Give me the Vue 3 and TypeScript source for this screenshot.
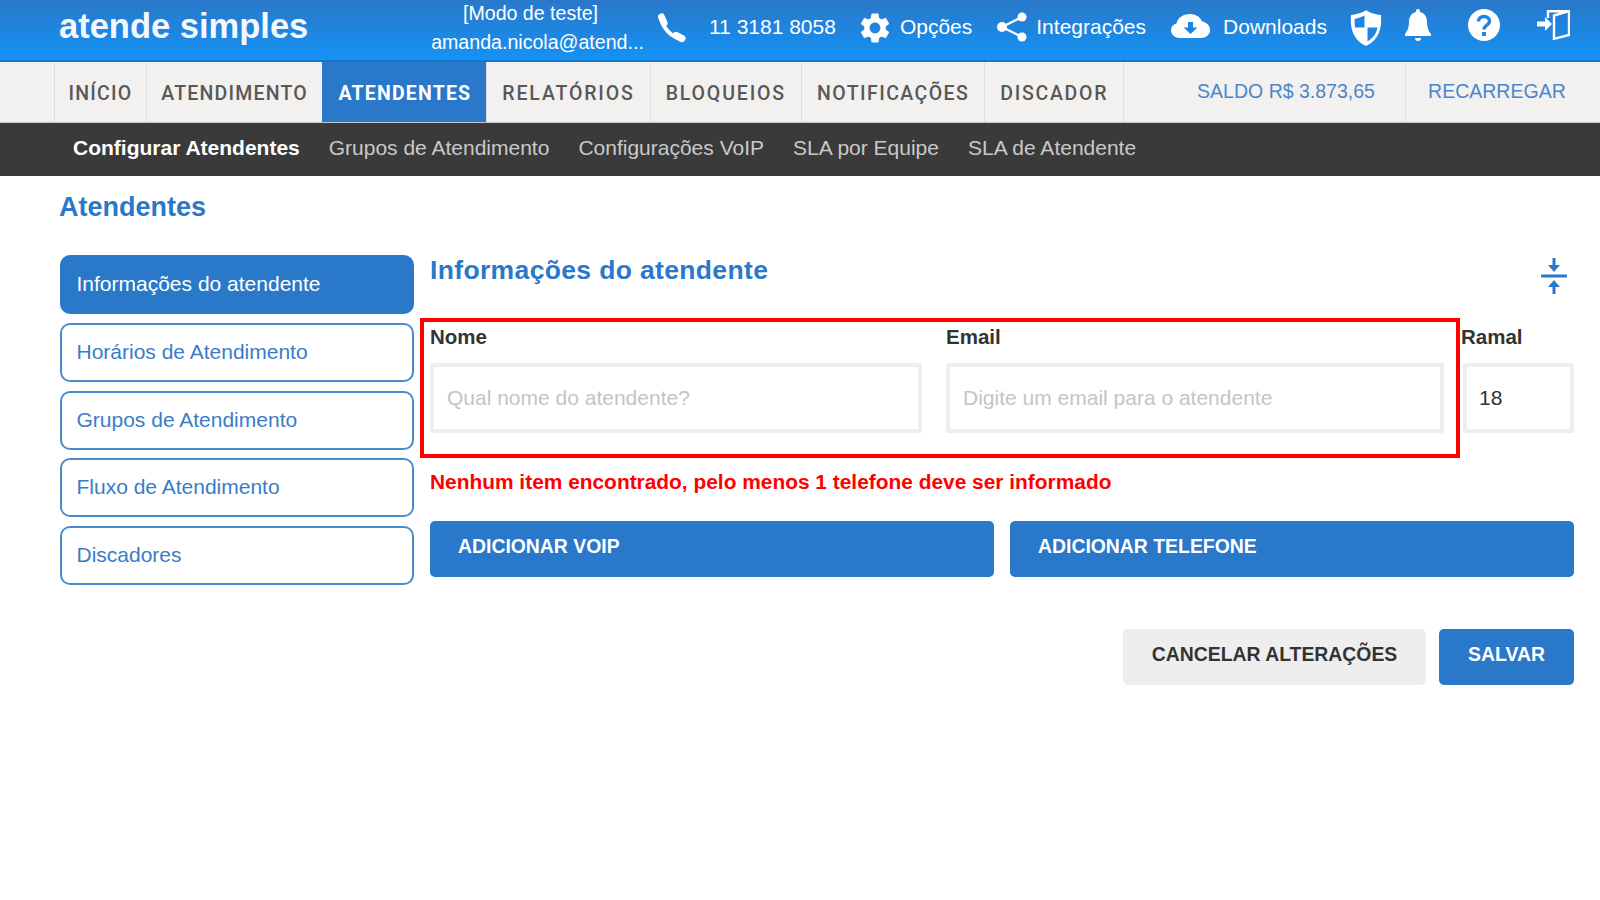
<script setup lang="ts">
const navItems = ["INÍCIO", "ATENDIMENTO", "ATENDENTES", "RELATÓRIOS", "BLOQUEIOS", "NOTIFICAÇÕES", "DISCADOR"];
const subItems = ["Configurar Atendentes", "Grupos de Atendimento", "Configurações VoIP", "SLA por Equipe", "SLA de Atendente"];
const sideItems = ["Informações do atendente", "Horários de Atendimento", "Grupos de Atendimento", "Fluxo de Atendimento", "Discadores"];
</script>

<template>
  <div class="page">
    <header class="topbar">
      <div class="logo">atende simples</div>
      <div class="account">
        <span class="mode">[Modo de teste]</span>
        <span>amanda.nicola@atend...</span>
      </div>
      <svg class="ico phone" viewBox="0 0 30 30" fill="none" stroke="#fff" stroke-linecap="round">
        <path d="M5 5C5 14 14 25 25 25" stroke-width="4" />
        <path d="M4.500 4l2.500 6" stroke-width="7" />
        <path d="M19 22.500l6 3" stroke-width="7" />
      </svg>
      <span class="top-text phone-text">11 3181 8058</span>
      <svg class="ico gear" viewBox="2 2 20 20" fill="#fff">
        <path d="M19.140 12.940c.04-.3.06-.61.06-.94 0-.32-.02-.64-.07-.94l2.030-1.580c.18-.14.23-.41.12-.61l-1.920-3.320c-.12-.22-.37-.29-.59-.22l-2.390.96c-.5-.38-1.030-.7-1.620-.94l-.36-2.540c-.04-.24-.24-.41-.48-.41h-3.840c-.24 0-.43.17-.47.41l-.36 2.540c-.59.24-1.130.57-1.620.94l-2.390-.96c-.22-.08-.47 0-.59.22L2.740 8.870c-.12.21-.08.47.12.61l2.030 1.580c-.05.3-.09.63-.09.94s.02.64.07.94l-2.030 1.580c-.18.14-.23.41-.12.61l1.920 3.320c.12.22.37.29.59.22l2.390-.96c.5.38 1.030.7 1.620.94l.36 2.540c.05.24.24.41.48.41h3.840c.24 0 .44-.17.47-.41l.36-2.540c.59-.24 1.130-.56 1.620-.94l2.390.96c.22.08.47 0 .59-.22l1.920-3.320c.12-.22.07-.47-.12-.61l-2.010-1.580zM12 15.600c-1.980 0-3.600-1.620-3.600-3.600s1.620-3.600 3.600-3.600 3.600 1.620 3.600 3.600-1.620 3.600-3.600 3.600z" />
      </svg>
      <span class="top-text opts-text">Opções</span>
      <svg class="ico share" viewBox="0 0 30 30" fill="#fff">
        <path d="M25 5L5 15l20 10" fill="none" stroke="#fff" stroke-width="2.200" />
        <circle cx="25" cy="5" r="4.500" />
        <circle cx="5" cy="15" r="5" />
        <circle cx="25" cy="25" r="4.500" />
      </svg>
      <span class="top-text integ-text">Integrações</span>
      <svg class="ico cloud" viewBox="0 0 39 24">
        <path fill="#fff" d="M9 24C4 24 0 20.500 0 16.500c0-3.500 2-6 5.500-7C6.500 4 12 0 19 0c5.500 0 10 2.800 12 7.500 4.500.5 8 4 8 8.500 0 4.500-4 8-9 8z" />
        <path fill="#1d85e4" d="M17 8h5v5.500h4.500L19.500 20l-7-6.500H17z" />
      </svg>
      <span class="top-text down-text">Downloads</span>
      <svg class="ico shield" viewBox="0 0 32 36">
        <path fill="#fff" d="M16 0c3 2.500 9 4.500 15 5 1 13-2 25-15 31C3 30 0 18 1 5c6-.5 12-2.500 15-5z" />
        <path fill="#1d85e4" d="M14.500 5.500v12H5c-.3-3 -.4-5.500-.3-8.700 3.800-.5 7-1.700 9.800-3.300zM17.500 17.500h10c-1 5.500-4 10.500-10 14z" />
      </svg>
      <svg class="ico bell" viewBox="0 0 26 32" fill="#fff">
        <path d="M13 0c1.200 0 2 .8 2 2v1c4.500 1 7 5 7 9.500 0 6 1.500 9.500 4 12.500v2H0v-2c2.500-3 4-6.500 4-12.500C4 8 6.500 4 11 3V2c0-1.200.8-2 2-2z" />
        <path d="M10 29h6c0 1.700-1.300 3-3 3s-3-1.300-3-3z" />
      </svg>
      <svg class="ico help" viewBox="0 0 32 32">
        <circle cx="16" cy="16" r="16" fill="#fff" />
        <path d="M10.500 12.500c0-3 2.500-5 5.500-5s5.500 2 5.500 4.700c0 4-5.500 4-5.500 8.300" fill="none" stroke="#1d85e4" stroke-width="3.500" />
        <rect x="14" y="23" width="4" height="4" fill="#1d85e4" />
      </svg>
      <svg class="ico exit" viewBox="0 0 33 30">
        <path fill="#fff" d="M0 11.500h8V7l7 7-7 7v-4.500H0z" />
        <path fill="none" stroke="#fff" stroke-width="2.400" d="M11 8V1.200h21V25L17 28.800V5.500L32 1.200" />
      </svg>
    </header>

    <nav class="mainnav">
      <a v-for="item in navItems" :key="item" class="nav-item" :class="{ active: item === 'ATENDENTES' }">{{ item }}</a>
      <span class="saldo">SALDO R$ 3.873,65</span>
      <span class="recarregar">RECARREGAR</span>
    </nav>

    <div class="subnav">
      <a v-for="(item, i) in subItems" :key="item" class="sub-item" :class="{ current: i === 0 }">{{ item }}</a>
    </div>

    <main class="content">
      <h1 class="page-title">Atendentes</h1>
      <div class="columns">
        <aside class="sidebar">
          <a v-for="(item, i) in sideItems" :key="item" class="side-item" :class="{ selected: i === 0 }">{{ item }}</a>
        </aside>

        <section class="panel">
          <div class="panel-head">
            <h2>Informações do atendente</h2>
            <svg class="collapse" viewBox="0 0 26 36" fill="#2a78c9">
              <path d="M11.500 0h3v7H19l-6 7-6-7h4.500z" />
              <rect x="0" y="16.500" width="26" height="3" />
              <path d="M13 22l6 7h-4.500v7h-3v-7H7z" />
            </svg>
          </div>

          <div class="fields">
            <div class="highlight"></div>
            <label class="field">
              <span>Nome</span>
              <input type="text" placeholder="Qual nome do atendente?" />
            </label>
            <label class="field">
              <span>Email</span>
              <input type="text" placeholder="Digite um email para o atendente" />
            </label>
            <label class="field ramal">
              <span>Ramal</span>
              <input type="text" value="18" />
            </label>
          </div>

          <p class="error">Nenhum item encontrado, pelo menos 1 telefone deve ser informado</p>

          <div class="add-row">
            <button class="btn primary add-voip">ADICIONAR VOIP</button>
            <button class="btn primary add-tel">ADICIONAR TELEFONE</button>
          </div>

          <div class="actions">
            <button class="btn cancel">CANCELAR ALTERAÇÕES</button>
            <button class="btn primary save">SALVAR</button>
          </div>
        </section>
      </div>
    </main>
  </div>
</template>

<style>
html,
body {
  background: #fff;
}
</style>

<style scoped>
.page {
  width: 1600px;
  height: 900px;
  overflow: hidden;
  font-family: "Liberation Sans", Arial, sans-serif;
  color: #333;
}

/* topo */
.topbar {
  height: 60px;
  border-bottom: 2px solid #0f78cc;
  background: linear-gradient(180deg, #2a78c9, #1492f5);
  display: flex;
  align-items: center;
  color: #fff;
}

.logo {
  margin-left: 59px;
  width: 372px;
  font-size: 34.500px;
  font-weight: 700;
  color: #f4f8fd;
  margin-top: -7px;
}

.account {
  width: 213px;
  display: flex;
  flex-direction: column;
  align-items: center;
  gap: 8px;
  font-size: 19.600px;
  line-height: 21px;
  margin-top: -4px;
  white-space: nowrap;
}

.mode {
  margin-right: 14px;
}

.ico {
  flex-shrink: 0;
  display: block;
}

.top-text {
  font-size: 21px;
  white-space: nowrap;
  margin-top: -7px;
}

.phone {
  width: 30px;
  height: 30px;
  margin-left: 13px;
  margin-top: -4px;
}

.phone-text {
  margin-left: 22px;
}

.gear {
  width: 30px;
  height: 30px;
  margin-left: 24px;
  margin-top: -5px;
}

.opts-text {
  margin-left: 10px;
}

.share {
  width: 30px;
  height: 30px;
  margin-left: 25px;
  margin-top: -6px;
}

.integ-text {
  margin-left: 9px;
}

.cloud {
  width: 39px;
  height: 24px;
  margin-left: 25px;
  margin-top: -8px;
}

.down-text {
  margin-left: 13px;
}

.shield {
  width: 32px;
  height: 36px;
  margin-left: 23px;
  margin-top: -4px;
}

.bell {
  width: 26px;
  height: 32px;
  margin-left: 23px;
  margin-top: -10px;
}

.help {
  width: 32px;
  height: 32px;
  margin-left: 37px;
  margin-top: -10px;
}

.exit {
  width: 33px;
  height: 30px;
  margin-left: 37px;
  margin-top: -10px;
}

/* menu principal */
.mainnav {
  height: 60px;
  border-bottom: 1px solid #c9c9c9;
  background: #f2f1ef;
  display: flex;
  padding-left: 54px;
}

.nav-item {
  display: flex;
  align-items: center;
  padding: 2px 14.500px 0;
  font-size: 19.500px;
  letter-spacing: 1.200px;
  font-family: Roboto, "Liberation Sans", sans-serif;
  font-weight: 500;
  color: #585858;
  border-left: 1px solid #dedede;
}

.nav-item:nth-child(1) {
  padding: 2px 13.500px 0;
}

.nav-item:nth-child(3) {
  padding: 2px 15px 0;
}

.nav-item:nth-child(n + 4) {
  letter-spacing: 1.850px;
  padding: 2px 15px 0;
}

.nav-item:nth-child(6) {
  letter-spacing: 1.450px;
}

.nav-item:nth-child(7) {
  letter-spacing: 1.700px;
  border-right: 1px solid #dedede;
}

.nav-item.active {
  background: #2a78c9;
  color: #fff;
  border-left-color: #2a78c9;
  font-weight: 700;
}

.saldo,
.recarregar {
  display: flex;
  align-items: center;
  font-size: 19.500px;
  color: #4a86cc;
  margin-top: -2px;
}

.saldo {
  margin-left: 73px;
  width: 208px;
}

.recarregar {
  padding-left: 22px;
  border-left: 1px solid #dedede;
  margin-top: 0;
  padding-bottom: 2px;
}

/* submenu */
.subnav {
  height: 53px;
  box-sizing: border-box;
  padding: 0 0 4px 73px;
  background: #3a3a3a;
  display: flex;
  align-items: center;
  gap: 29px;
}

.sub-item {
  font-size: 21px;
  color: #c9c9c9;
  white-space: nowrap;
}

.sub-item.current {
  color: #fff;
  font-weight: 700;
}

/* conteudo */
.content {
  padding: 16px 26px 0 60px;
}

.page-title {
  margin: 0 0 0 -1px;
  height: 63px;
  font-size: 27px;
  line-height: 30px;
  font-weight: 700;
  color: #2a78c9;
}

.columns {
  display: flex;
  gap: 16px;
}

.sidebar {
  width: 354px;
  flex-shrink: 0;
  display: flex;
  flex-direction: column;
  gap: 8.800px;
}

.side-item {
  height: 59px;
  box-sizing: border-box;
  border: 2px solid #4a8bd2;
  border-radius: 10px;
  padding: 14px 14.500px 0;
  font-size: 21px;
  line-height: 26px;
  color: #3a7cc8;
}

.side-item.selected {
  background: #2a78c9;
  border-color: #2a78c9;
  color: #fff;
}

.panel {
  flex: 1;
  min-width: 0;
}

.panel-head {
  height: 70px;
  display: flex;
  justify-content: space-between;
  align-items: flex-start;
}

.panel-head h2 {
  margin: 0;
  font-size: 26.500px;
  line-height: 30px;
  font-weight: 700;
  letter-spacing: 0.350px;
  color: #2a78c9;
}

.collapse {
  width: 26px;
  height: 36px;
  margin-right: 7px;
  margin-top: 3px;
}

.fields {
  position: relative;
  display: grid;
  grid-template-columns: 492px 498px 106px;
  column-gap: 24px;
}

.highlight {
  position: absolute;
  left: -10px;
  top: -7px;
  width: 1040px;
  height: 140px;
  box-sizing: border-box;
  border: 4px solid #f00;
  pointer-events: none;
}

.field {
  display: flex;
  flex-direction: column;
}

.field.ramal {
  margin-left: -5px;
}

.field span {
  display: block;
  height: 38px;
  font-size: 20.500px;
  line-height: 24px;
  font-weight: 700;
  color: #333;
}

.field.ramal span {
  margin-left: -2px;
}

.field input {
  width: 100%;
  height: 70px;
  box-sizing: border-box;
  border: 4px solid #eee;
  border-radius: 2px;
  outline: none;
  padding: 0 13px;
  font-family: "Liberation Sans", Arial, sans-serif;
  font-size: 21px;
  color: #333;
  background: #fff;
}

.field.ramal input {
  padding: 0 12px;
}

.field input::placeholder {
  color: #c4c4c4;
  opacity: 1;
}

.error {
  margin: 36px 0 0;
  font-size: 20.900px;
  line-height: 26px;
  font-weight: 700;
  color: #f00;
}

.add-row {
  display: flex;
  gap: 16px;
  margin-top: 26px;
}

.btn {
  height: 56px;
  border: none;
  border-radius: 5px;
  font-family: "Liberation Sans", Arial, sans-serif;
  font-size: 19.400px;
  font-weight: 700;
  padding: 0 0 6px;
}

.primary {
  background: #2a78c9;
  color: #fff;
}

.add-voip,
.add-tel {
  text-align: left;
  padding-left: 28px;
}

.add-voip {
  width: 564px;
}

.add-tel {
  flex: 1;
}

.actions {
  display: flex;
  justify-content: flex-end;
  gap: 13px;
  margin-top: 52px;
}

.cancel {
  width: 303px;
  background: #eee;
  color: #333;
}

.save {
  width: 135px;
}
</style>
